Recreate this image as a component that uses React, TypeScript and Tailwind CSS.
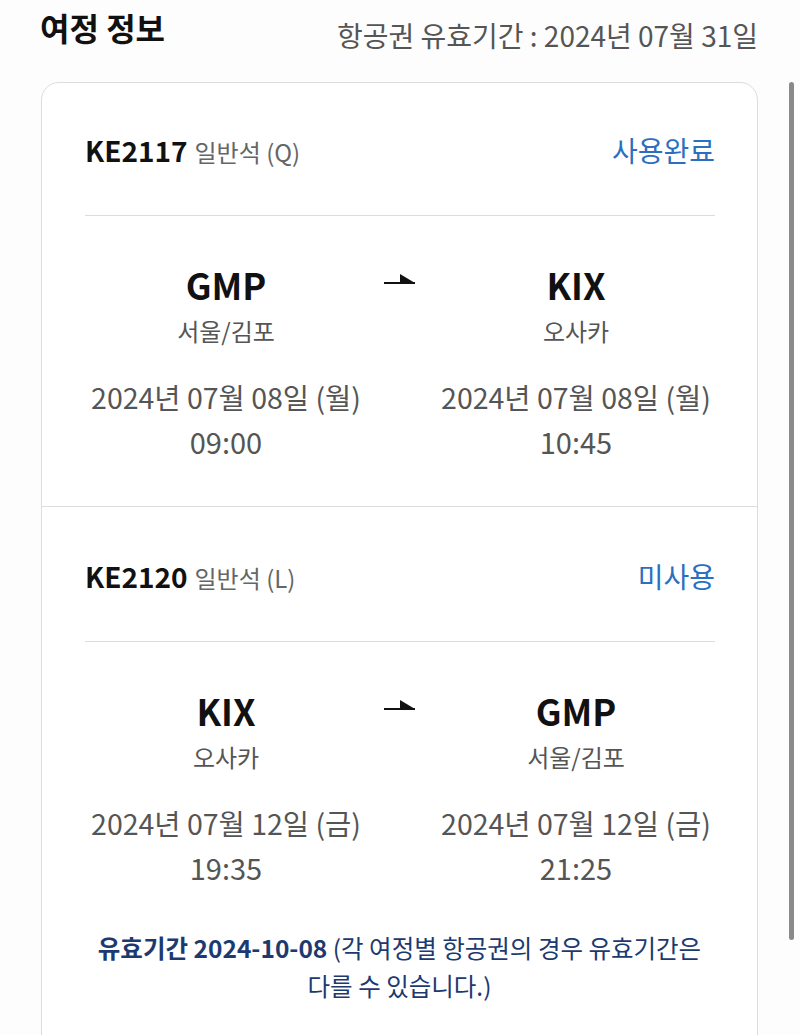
const font = { fontFamily: '"Noto Sans CJK KR", "Noto Sans", sans-serif' };

type Leg = {
  flight: string;
  cabin: string;
  status: string;
  from: { code: string; city: string; date: string; time: string };
  to: { code: string; city: string; date: string; time: string };
};

const legs: Leg[] = [
  {
    flight: "KE2117",
    cabin: "일반석 (Q)",
    status: "사용완료",
    from: { code: "GMP", city: "서울/김포", date: "2024년 07월 08일 (월)", time: "09:00" },
    to: { code: "KIX", city: "오사카", date: "2024년 07월 08일 (월)", time: "10:45" },
  },
  {
    flight: "KE2120",
    cabin: "일반석 (L)",
    status: "미사용",
    from: { code: "KIX", city: "오사카", date: "2024년 07월 12일 (금)", time: "19:35" },
    to: { code: "GMP", city: "서울/김포", date: "2024년 07월 12일 (금)", time: "21:25" },
  },
];

function FlightArrow() {
  return (
    <svg width="34" height="14" viewBox="0 0 34 14" fill="none">
      <line x1="1" y1="11" x2="32" y2="11" stroke="#111" strokeWidth="2" />
      <path d="M17 2 L32 11 L17 11 Z" fill="#111" />
    </svg>
  );
}

function Point({ p }: { p: Leg["from"] }) {
  return (
    <div className="flex flex-col items-center">
      <div className="h-[40px] flex items-center text-[36px] font-bold text-[#111] leading-none">{p.code}</div>
      <div className="mt-[12px] h-[30px] flex items-center text-[24px] text-[#555]">{p.city}</div>
      <div className="mt-[33px] h-[36px] flex items-center text-[28.5px] text-[#555]">{p.date}</div>
      <div className="mt-[9px] h-[36px] flex items-center text-[29px] text-[#555]">{p.time}</div>
    </div>
  );
}

function LegSection({ leg, last }: { leg: Leg; last?: boolean }) {
  return (
    <div className={last ? "pl-[43px] pr-[42px] pt-[53px]" : "pl-[43px] pr-[42px] pt-[51px] pb-[46px] border-b border-[#dedede]"}>
      <div className="h-[32px] flex items-center justify-between">
        <div className="flex items-baseline gap-[7px]">
          <span className="text-[28px] font-bold text-[#111]">{leg.flight}</span>
          <span className="text-[24px] text-[#666]">{leg.cabin}</span>
        </div>
        <span className="text-[28px] text-[#2a6fc0]">{leg.status}</span>
      </div>
      <div className="mt-[49px] h-px bg-[#dcdcdc]" />
      <div className="mt-[48px] grid grid-cols-[282px_68px_282px]">
        <Point p={leg.from} />
        <div className="h-[40px] flex items-center justify-center pb-[10px] pr-[2px]">
          <FlightArrow />
        </div>
        <Point p={leg.to} />
      </div>
    </div>
  );
}

export default function App() {
  return (
    <div className="relative min-h-[1035px] bg-[#fdfdfd] overflow-hidden" style={font}>
      <div className="flex items-start justify-between pl-[40px] pr-[42px] h-[82px]">
        <h2 className="mt-[6px] text-[32px] font-bold text-[#111] leading-[42px]">여정 정보</h2>
        <span className="mt-[15px] text-[28px] text-[#555] leading-[40px]">항공권 유효기간 : 2024년 07월 31일</span>
      </div>
      <div className="mx-[41px] w-[717px] rounded-[18px] border border-[#dcdcdc] bg-white">
        <LegSection leg={legs[0]} />
        <LegSection leg={legs[1]} last />
        <div className="mt-[43px] px-[43px] pb-[60px] text-center text-[24.5px] leading-[38px] text-[#1c3a70]">
          <span className="font-bold">유효기간 2024-10-08</span> (각 여정별 항공권의 경우 유효기간은
          <br />
          다를 수 있습니다.)
        </div>
      </div>
      <div className="absolute left-[789px] top-[82px] w-[5px] h-[858px] rounded-full bg-[#8a8a8a]" />
    </div>
  );
}
